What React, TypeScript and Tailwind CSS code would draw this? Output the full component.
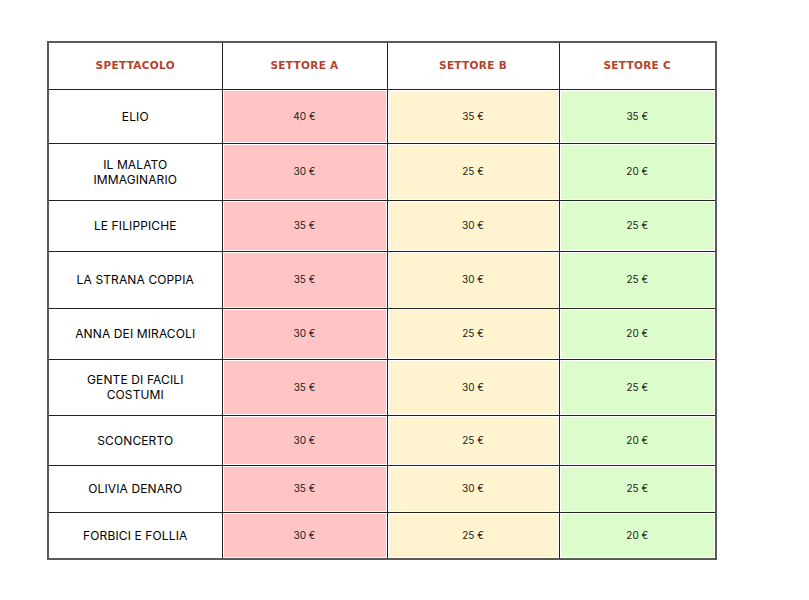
const rows = [
  { name: ["ELIO"], a: 40, b: 35, c: 35, h: 54 },
  { name: ["IL MALATO", "IMMAGINARIO"], a: 30, b: 25, c: 20, h: 57 },
  { name: ["LE FILIPPICHE"], a: 35, b: 30, c: 25, h: 51 },
  { name: ["LA STRANA COPPIA"], a: 35, b: 30, c: 25, h: 57 },
  { name: ["ANNA DEI MIRACOLI"], a: 30, b: 25, c: 20, h: 51 },
  { name: ["GENTE DI FACILI", "COSTUMI"], a: 35, b: 30, c: 25, h: 56 },
  { name: ["SCONCERTO"], a: 30, b: 25, c: 20, h: 50 },
  { name: ["OLIVIA DENARO"], a: 35, b: 30, c: 25, h: 47 },
  { name: ["FORBICI E FOLLIA"], a: 30, b: 25, c: 20, h: 47 },
];

const headers = ["SPETTACOLO", "SETTORE A", "SETTORE B", "SETTORE C"];

export default function App() {
  return (
    <div className="w-[809px] h-[600px] bg-white pt-[41px] pl-[47px]">
      <table className="border-collapse border-2 border-[#5a5a5a] table-fixed w-[668px] text-center">
        <colgroup>
          <col className="w-[174px]" />
          <col className="w-[165px]" />
          <col className="w-[172px]" />
          <col className="w-[157px]" />
        </colgroup>
        <thead>
          <tr className="h-[47px]">
            {headers.map((h) => (
              <th
                key={h}
                className="border border-[#222] font-bold text-[10.5px] tracking-[0.03em] text-[#b4432c] font-['DejaVu_Sans',sans-serif]"
              >
                {h}
              </th>
            ))}
          </tr>
        </thead>
        <tbody>
          {rows.map((r) => (
            <tr key={r.name.join(" ")} style={{ height: r.h }}>
              <td className="border border-[#222] text-[12px] leading-[15px] text-black font-normal tracking-[0.01em] font-['Inter',sans-serif]">
                {r.name.map((n) => (
                  <div key={n}>{n}</div>
                ))}
              </td>
              <td className="border border-[#222] bg-[#ffc4c4] shadow-[inset_0_0_0_1px_#fff] text-[10px] text-[#222] font-['Inter',sans-serif]">
                {r.a} €
              </td>
              <td className="border border-[#222] bg-[#fff4cf] shadow-[inset_0_0_0_1px_#fff] text-[10px] text-[#222] font-['Inter',sans-serif]">
                {r.b} €
              </td>
              <td className="border border-[#222] bg-[#dcfccb] shadow-[inset_0_0_0_1px_#fff] text-[10px] text-[#222] font-['Inter',sans-serif]">
                {r.c} €
              </td>
            </tr>
          ))}
        </tbody>
      </table>
    </div>
  );
}
